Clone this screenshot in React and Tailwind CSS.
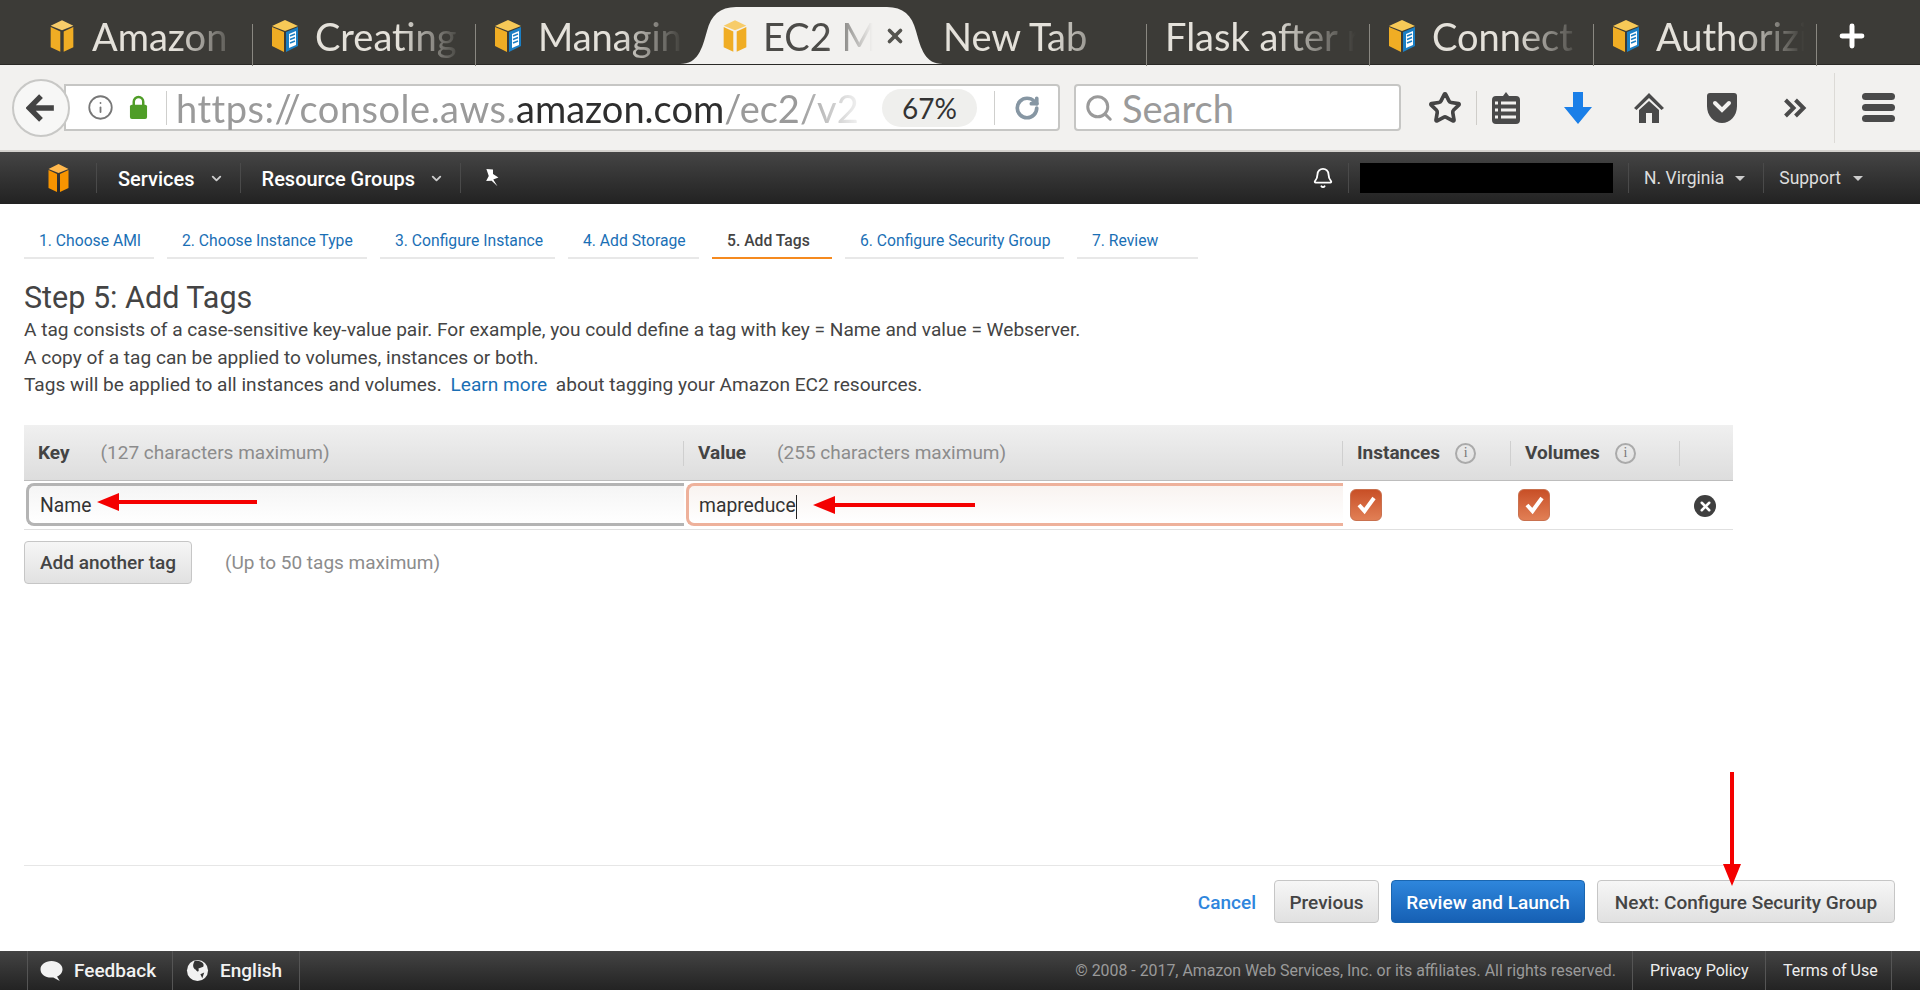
import React from 'react';
import { Bell, Info, Search, RotateCw, Star, ChevronDown, Plus, X } from 'lucide-react';

const TABS = [
  { title: 'Amazon', icon: 'cube', width: 'w-[223px]' },
  { title: 'Creating', icon: 'doc', width: 'w-[223px]' },
  { title: 'Managing', icon: 'doc', width: 'w-[228px]', padding: 'pl-[18px] pr-[16px]' },
  { title: 'EC2 Management', icon: 'cube', width: 'w-[221px]', padding: 'pl-[17px] pr-[19px]', active: true },
  { title: 'New Tab', width: 'w-[222px]' },
  { title: 'Flask after request', width: 'w-[223px]' },
  { title: 'Connect to', icon: 'doc', width: 'w-[224px]' },
  { title: 'Authorizing', icon: 'doc', width: 'w-[223px]' },
];

const STEPS = [
  { label: '1. Choose AMI', width: 'w-[130px]' },
  { label: '2. Choose Instance Type', width: 'w-[200px]' },
  { label: '3. Configure Instance', width: 'w-[175px]' },
  { label: '4. Add Storage', width: 'w-[131px]' },
  { label: '5. Add Tags', width: 'w-[120px]', active: true },
  { label: '6. Configure Security Group', width: 'w-[219px]' },
  { label: '7. Review', width: 'w-[121px]' },
];

const CubeIcon = ({ className = 'w-7 h-[34px]', dark = false }) => (
  <svg viewBox="0 0 24 30" className={className}>
    <path d="M12 1 L22 6 L12 10 L2 6 Z" fill={dark ? '#ffb84d' : '#f7cc6a'} />
    <path d="M2 7 L10.5 11 V29 L2 25 Z" fill={dark ? '#f79400' : '#f0ad24'} />
    <path d="M22 7 L13.5 11 V29 L22 25 Z" fill={dark ? '#f79400' : '#f0ad24'} />
  </svg>
);

const DocCubeIcon = () => (
  <svg viewBox="0 0 28 34" className="w-7 h-[34px]">
    <path d="M14 1 L27 7 L14 12 L1 7 Z" fill="#f7c957" />
    <path d="M1 8 L13 13 V33 L1 27 Z" fill="#f0ad24" />
    <path d="M15 13 L27 8 V27 L15 33 Z" fill="#1b7fc4" />
    <path d="M18 15 L25 12 V26 L18 29 Z" fill="#fff" />
    <path d="M19 17 L24 15 M19 20.5 L24 18.5 M19 24 L24 22" stroke="#1b7fc4" strokeWidth="1.4" />
  </svg>
);

const BrowserTab = ({ tab }) => (
  <div className={`relative flex items-center h-full shrink-0 ${tab.width} ${tab.padding || 'pl-[18px] pr-[8px]'}`}>
    {tab.active && (
      <svg viewBox="0 0 263 57" preserveAspectRatio="none" className="absolute left-[-24px] bottom-0 w-[263px] h-[57px]">
        <path d="M0 57 C18 57 22 42 27 24 C31 8 40 0 56 0 H207 C223 0 232 8 236 24 C241 42 245 57 263 57 Z" fill="#f2f1ef" />
      </svg>
    )}
    {tab.icon && (
      <span className={`relative shrink-0 ${tab.active ? 'mr-[14px]' : 'mr-[16px]'}`}>
        {tab.icon === 'cube' ? <CubeIcon /> : <DocCubeIcon />}
      </span>
    )}
    <span className={`relative flex-1 overflow-hidden whitespace-nowrap text-[38px] leading-[44px] font-['Lato',sans-serif] [mask-image:linear-gradient(to_right,black_55%,transparent_97%)] ${tab.active ? 'text-[#4c4b48]' : 'text-[#e4e1da]'}`}>
      {tab.title}
    </span>
    {tab.active && <X className="relative shrink-0 w-[22px] h-[22px] ml-2 text-[#55544f]" strokeWidth={4} />}
    {!tab.active && tab.title !== 'Managing' && <span className="absolute right-0 top-[17px] h-[42px] w-px bg-[#8a8881]" />}
  </div>
);

const TabBar = () => (
  <div className="flex items-end h-[65px] pl-[30px] bg-[#3c3b37] border-b border-[#2a2926] shrink-0">
    <div className="flex items-center h-[57px]">
      {TABS.map(tab => <BrowserTab key={tab.title} tab={tab} />)}
      <Plus className="ml-[18px] w-[34px] h-[34px] text-white" strokeWidth={3.5} />
    </div>
  </div>
);

const ToolbarIcons = () => (
  <div className="flex items-center ml-[27px]">
    <Star className="w-[34px] h-[34px] text-[#444]" strokeWidth={2.6} />
    <span className="ml-[14px] h-[34px] w-px bg-[#cfcdc9]" />
    <svg viewBox="0 0 28 32" className="ml-[15px] w-[28px] h-[32px]">
      <path d="M11 4 L14 0 L17 4 H24 Q28 4 28 8 V28 Q28 32 24 32 H4 Q0 32 0 28 V8 Q0 4 4 4 Z" fill="#4a4a4a" />
      <path d="M9 11 H24 M9 18 H24 M9 25 H24" stroke="#f2f1ef" strokeWidth="3" />
      <path d="M3 11 H6 M3 18 H6 M3 25 H6" stroke="#f2f1ef" strokeWidth="3" />
    </svg>
    <svg viewBox="0 0 28 32" className="ml-[44px] w-[28px] h-[32px]">
      <path d="M9 0 H19 V15 H28 L14 32 L0 15 H9 Z" fill="#1a7fe8" />
    </svg>
    <svg viewBox="0 0 30 30" className="ml-[42px] w-[30px] h-[30px]">
      <path d="M15 0 L30 15 L27.5 17 L15 5 L2.5 17 L0 15 Z" fill="#4a4a4a" />
      <path d="M5 17 L15 8 L25 17 V30 H18 V20 H12 V30 H5 Z" fill="#4a4a4a" />
    </svg>
    <svg viewBox="0 0 30 30" className="ml-[42px] w-[32px] h-[30px]">
      <path d="M3 0 H27 Q30 0 30 3 V13 C30 23 23 30 15 30 C7 30 0 23 0 13 V3 Q0 0 3 0 Z" fill="#4a4a4a" />
      <path d="M8 10 L15 17 L22 10" fill="none" stroke="#f2f1ef" strokeWidth="4" strokeLinecap="round" />
    </svg>
    <svg viewBox="0 0 24 20" className="ml-[45px] w-[25px] h-[20px]">
      <path d="M2 2 L10 10 L2 18 M12 2 L20 10 L12 18" fill="none" stroke="#4a4a4a" strokeWidth="4" />
    </svg>
    <span className="ml-[26px] h-[70px] w-px bg-[#dcdad6]" />
    <div className="ml-[27px] flex flex-col gap-[4px]">
      <span className="block w-[33px] h-[7px] rounded-full bg-[#4a4a4a]" />
      <span className="block w-[33px] h-[7px] rounded-full bg-[#4a4a4a]" />
      <span className="block w-[33px] h-[7px] rounded-full bg-[#4a4a4a]" />
    </div>
  </div>
);

const UrlBar = () => (
  <div className="flex items-center h-[87px] pl-[12px] bg-[#f2f1ef] border-b-2 border-[#d4d2ce] shrink-0">
    <div className="relative z-10 flex items-center justify-center w-[58px] h-[58px] rounded-full bg-[#f7f7f6] border-2 border-[#c8c8c6]">
      <svg viewBox="0 0 28 28" className="w-[30px] h-[30px]">
        <path d="M14 3 L3 14 L14 25 M4 14 H26" fill="none" stroke="#444" strokeWidth="5" />
      </svg>
    </div>
    <div className="flex items-center -ml-[6px] w-[996px] h-[47px] bg-white border-2 border-[#c6c6c4] rounded-r-[4px] pl-[21px]">
      <Info className="w-[27px] h-[27px] text-[#777] shrink-0" strokeWidth={1.6} />
      <svg viewBox="0 0 20 26" className="ml-[15px] w-[19px] h-[25px] shrink-0">
        <path d="M5 11 V7 a5 5 0 0 1 10 0 V11" fill="none" stroke="#4f9d27" strokeWidth="2.6" />
        <rect x="1" y="10" width="18" height="15" rx="2" fill="#4f9d27" />
      </svg>
      <span className="ml-[18px] h-[34px] w-px bg-[#cfcfcd] shrink-0" />
      <div className="ml-[9px] w-[706px] overflow-hidden whitespace-nowrap text-[38px] leading-[44px] font-['Lato',sans-serif] text-[#9a9a9a] [mask-image:linear-gradient(to_right,black_88%,transparent_98%)]">
        <span className="tracking-[0.5px]">https://console.aws.</span><span className="text-[#2e2e2e]">amazon.com</span>/ec2/v2
      </div>
      <span className="flex items-center justify-center w-[95px] h-[38px] rounded-full bg-[#efefed] text-[28px] leading-none font-['Lato',sans-serif] text-[#333] shrink-0">67%</span>
      <span className="ml-[17px] h-[34px] w-px bg-[#cfcfcd] shrink-0" />
      <RotateCw className="ml-[19px] w-[26px] h-[26px] text-[#8696a3] shrink-0" strokeWidth={3.4} />
    </div>
    <div className="flex items-center ml-[14px] w-[327px] h-[47px] bg-white border-2 border-[#c6c6c4] rounded-[4px] pl-[8px]">
      <Search className="w-[30px] h-[30px] text-[#9a9a9a]" strokeWidth={2.4} />
      <span className="ml-[8px] text-[38px] leading-[44px] font-['Lato',sans-serif] text-[#9a9a9a]">Search</span>
    </div>
    <ToolbarIcons />
  </div>
);

const NavSep = ({ className = '' }) => <span className={`h-[30px] w-px bg-[#1c1c1c] border-r border-[#4a4a4a] shrink-0 ${className}`} />;

const AwsNav = () => (
  <div className="flex items-center h-[52px] pl-[44px] pr-[57px] bg-linear-to-b from-[#454545] to-[#222] shrink-0 font-['Roboto',sans-serif]">
    <CubeIcon className="w-[29px] h-[30px]" dark />
    <NavSep className="ml-[23px]" />
    <span className="ml-[21px] pt-[1px] text-[20px] font-medium text-white">Services</span>
    <ChevronDown className="ml-[14px] w-[15px] h-[15px] text-[#ccc]" strokeWidth={3} />
    <NavSep className="ml-[16px]" />
    <span className="ml-[21px] pt-[1px] text-[20px] font-medium text-white">Resource Groups</span>
    <ChevronDown className="ml-[14px] w-[15px] h-[15px] text-[#ccc]" strokeWidth={3} />
    <NavSep className="ml-[16px]" />
    <svg viewBox="0 0 16 22" className="ml-[23px] w-[16px] h-[20px] -rotate-12">
      <path d="M4 0 L11 2 L10 7 L15 12 L9 13 L12 21 L7 14 L1 13 L5 8 Z" fill="#fff" />
    </svg>
    <Bell className="ml-auto w-[22px] h-[24px] text-white" strokeWidth={2} />
    <NavSep className="ml-[14px]" />
    <div className="ml-[11px] w-[253px] h-[30px] bg-black" />
    <NavSep className="ml-[15px]" />
    <span className="ml-[15px] text-[17.5px] text-[#ddd]">N. Virginia</span>
    <span className="ml-[11px] border-x-[5px] border-x-transparent border-t-[5px] border-t-[#ccc]" />
    <NavSep className="ml-[18px]" />
    <span className="ml-[15px] text-[17.5px] text-[#ddd]">Support</span>
    <span className="ml-[12px] border-x-[5px] border-x-transparent border-t-[5px] border-t-[#ccc]" />
  </div>
);

const WizardSteps = () => (
  <div className="flex gap-[13px] mt-[25px]">
    {STEPS.map(step => (
      <div
        key={step.label}
        className={`pl-[15px] h-[30px] text-[15.7px] leading-[24px] border-b-2 shrink-0 ${step.width} ${step.active ? 'font-medium text-[#444] border-[#f58a1f]' : 'text-[#1a6fb5] border-[#e8e8e8]'}`}
      >
        {step.label}
      </div>
    ))}
  </div>
);

const HeaderInfo = () => (
  <span className="flex items-center justify-center ml-[15px] w-[21px] h-[21px] rounded-full border-2 border-[#aaa] text-[14px] leading-none text-[#777] font-['Liberation_Serif',serif]">i</span>
);

const TagCheckbox = () => (
  <div className="flex items-center justify-center w-[32px] h-[32px] rounded-[6px] bg-linear-to-b from-[#c84f26] to-[#e17f55] border border-[#c9714f]">
    <svg viewBox="0 0 24 24" className="w-[24px] h-[24px]">
      <path d="M5 12 L10.5 18 L20 5" fill="none" stroke="#fff" strokeWidth="4" />
    </svg>
  </div>
);

const TagsTable = () => (
  <div className="mt-[26px] w-[1709px]">
    <div className="flex items-center h-[56px] pt-[2px] bg-linear-to-b from-[#f0f0f0] to-[#dddddd] border-b border-[#bdbdbd] text-[19px]">
      <div className="flex items-center w-[660px] h-[25px] pl-[14px] border-r border-[#cfcfcf]">
        <span className="font-bold text-[#444]">Key</span>
        <span className="ml-[31px] text-[#8c8c8c]">(127 characters maximum)</span>
      </div>
      <div className="flex items-center w-[659px] h-[25px] pl-[14px] border-r border-[#cfcfcf]">
        <span className="font-bold text-[#444]">Value</span>
        <span className="ml-[31px] text-[#8c8c8c]">(255 characters maximum)</span>
      </div>
      <div className="flex items-center w-[168px] h-[25px] pl-[14px] border-r border-[#cfcfcf]">
        <span className="font-bold text-[#444]">Instances</span>
        <HeaderInfo />
      </div>
      <div className="flex items-center w-[169px] h-[25px] pl-[14px] border-r border-[#cfcfcf]">
        <span className="font-bold text-[#444]">Volumes</span>
        <HeaderInfo />
      </div>
    </div>
    <div className="flex items-center h-[49px] border-b border-[#e0e0e0] text-[19.3px]">
      <div className="w-[660px] pl-[2px]">
        <div className="flex items-center h-[43px] pl-[11px] pt-[4px] bg-linear-to-b from-[#f5f5f5] to-white border-[3px] border-r-0 border-[#b4b4b4] rounded-l-[8px] text-[#333]">Name</div>
      </div>
      <div className="w-[659px] pl-[2px]">
        <div className="flex items-center h-[43px] pl-[10px] pt-[4px] bg-linear-to-b from-[#f9f3f0] to-white border-[3px] border-r-0 border-[#eeb19b] rounded-l-[8px] text-[#333]">
          mapreduce<span className="w-px h-[24px] bg-[#222]" />
        </div>
      </div>
      <div className="w-[168px] pl-[7px]"><TagCheckbox /></div>
      <div className="w-[169px] pl-[7px]"><TagCheckbox /></div>
      <div className="pl-[14px] pt-[3px]">
        <span className="flex items-center justify-center w-[22px] h-[22px] rounded-full bg-[#3f3f3f]">
          <X className="w-[15px] h-[15px] text-white" strokeWidth={4} />
        </span>
      </div>
    </div>
  </div>
);

const GrayButton = ({ className = '', children }) => (
  <button className={`h-[43px] pt-[3px] rounded-[4px] border border-[#c6c6c6] bg-linear-to-b from-[#f6f6f6] to-[#e1e1e1] text-[19px] font-medium text-[#444] ${className}`}>
    {children}
  </button>
);

const Arrows = () => (
  <>
    <svg viewBox="0 0 160 18" className="absolute left-[97px] top-[493px] w-[160px] h-[18px]">
      <path d="M0 9 L22 0 V7 H160 V11 H22 V18 Z" fill="#f40000" />
    </svg>
    <svg viewBox="0 0 162 18" className="absolute left-[813px] top-[496px] w-[162px] h-[18px]">
      <path d="M0 9 L22 0 V7 H162 V11 H22 V18 Z" fill="#f40000" />
    </svg>
    <svg viewBox="0 0 18 114" className="absolute left-[1723px] top-[772px] w-[18px] h-[114px]">
      <path d="M9 114 L0 92 H7 V0 H11 V92 H18 Z" fill="#f40000" />
    </svg>
  </>
);

const PageFooter = () => (
  <div className="flex items-center h-[39px] pl-[27px] bg-linear-to-b from-[#444] to-[#232323] shrink-0 text-[19px]">
    <div className="flex items-center h-full border-l border-[#555] w-[145px]">
      <svg viewBox="0 0 26 24" className="ml-[11px] w-[25px] h-[22px]">
        <path d="M13 1 C20 1 25 5 25 10 C25 14 22 17 19 18 L22 23 L15 19 C7 20 1 16 1 10 C1 5 6 1 13 1 Z" fill="#f2f2f2" />
      </svg>
      <span className="ml-[10px] pt-[2px] font-medium text-[#f2f2f2]">Feedback</span>
    </div>
    <div className="flex items-center h-full border-l border-[#555] border-r w-[128px]">
      <svg viewBox="0 0 24 24" className="ml-[13px] w-[23px] h-[23px]">
        <circle cx="12" cy="12" r="11" fill="#f2f2f2" />
        <path d="M9 2 C14 1 20 4 18 8 L13 10 C14 14 12 14 10 11 C8 10 6 7 9 2 Z M15 16 L19 14 L17 20 Z" fill="#333" />
      </svg>
      <span className="ml-[11px] pt-[2px] font-medium text-[#f2f2f2]">English</span>
    </div>
    <span className="ml-auto pt-[1px] text-[15.9px] text-[#9a9a9a]">© 2008 - 2017, Amazon Web Services, Inc. or its affiliates. All rights reserved.</span>
    <span className="flex items-center h-full ml-[16px] pl-[17px] pt-[1px] w-[133px] border-l border-[#555] text-[16px] text-[#eee]">Privacy Policy</span>
    <span className="flex items-center h-full pl-[17px] pt-[1px] w-[127px] border-x border-[#555] text-[16px] text-[#eee]">Terms of Use</span>
    <span className="w-[28px]" />
  </div>
);

export default function App() {
  return (
    <div className="relative flex flex-col h-[990px] overflow-hidden bg-white font-['Roboto',sans-serif]">
      <TabBar />
      <UrlBar />
      <AwsNav />
      <div className="flex flex-col flex-1 pl-[24px]">
        <WizardSteps />
        <h1 className="mt-[21px] text-[30.5px] leading-[36px] text-[#444]">Step 5: Add Tags</h1>
        <div className="text-[19.1px] leading-[27.5px] text-[#444]">
          <p>A tag consists of a case-sensitive key-value pair. For example, you could define a tag with key = Name and value = Webserver.</p>
          <p>A copy of a tag can be applied to volumes, instances or both.</p>
          <p>Tags will be applied to all instances and volumes. <a className="mx-1 text-[#1a6fb5]">Learn more</a> about tagging your Amazon EC2 resources.</p>
        </div>
        <TagsTable />
        <div className="flex items-center mt-[11px]">
          <GrayButton className="w-[168px]">Add another tag</GrayButton>
          <span className="ml-[33px] pt-[3px] text-[19px] text-[#8c8c8c]">(Up to 50 tags maximum)</span>
        </div>
        <div className="mt-auto w-[1709px] border-t border-[#e6e6e6]" />
        <div className="flex items-center justify-end w-[1871px] mt-[14px] mb-[28px]">
          <a className="pt-[3px] text-[19px] font-medium text-[#2f86dd]">Cancel</a>
          <GrayButton className="ml-[18px] w-[105px]">Previous</GrayButton>
          <button className="ml-[12px] w-[194px] h-[43px] pt-[3px] rounded-[4px] border border-[#1a66b0] bg-linear-to-b from-[#2e86dc] to-[#1660b4] text-[19px] font-medium text-white">Review and Launch</button>
          <GrayButton className="ml-[12px] w-[298px]">Next: Configure Security Group</GrayButton>
        </div>
      </div>
      <PageFooter />
      <Arrows />
    </div>
  );
}
